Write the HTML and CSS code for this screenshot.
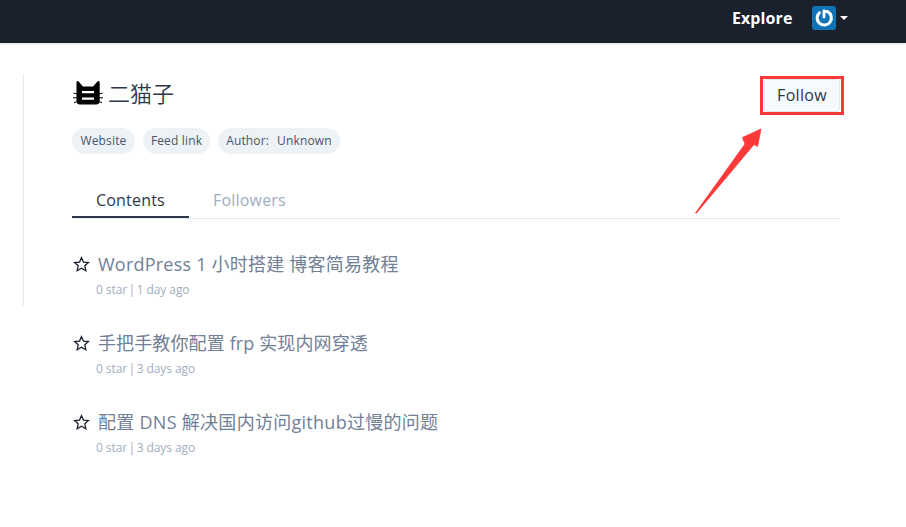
FILE: index.html
```html
<!DOCTYPE html>
<html lang="zh-CN">
<head>
<meta charset="utf-8">
<title>二猫子</title>
<link rel="stylesheet" href="styles.css">
</head>
<body>
<header class="navbar">
  <a class="explore">Explore</a>
  <div class="account">
    <svg class="avatar" viewBox="0 0 24 24" aria-hidden="true">
      <rect width="24" height="24" rx="3" fill="#1073b7"/>
      <path d="M7.400 6.800A7.100 7.100 0 1 0 15.500 5.700" fill="none" stroke="#fff" stroke-width="3" stroke-linecap="round"/>
      <path d="M12 5V11" stroke="#fff" stroke-width="2.800" stroke-linecap="round"/>
      <path d="M12 5L15.500 5.700" stroke="#fff" stroke-width="2.600" stroke-linecap="round"/>
    </svg>
    <svg class="caret" viewBox="0 0 8 4" aria-hidden="true"><path d="M0 0H8L4 4Z" fill="#fff"/></svg>
  </div>
</header>
<main class="page">
  <div class="rail"></div>
  <section class="profile">
    <div class="heading">
      <svg class="logo" viewBox="0 0 32 26" aria-hidden="true">
        <path d="M4.500 22V4C4.500 1.500 6 1.500 7 3L11 7.500H21L25 3C26 1.500 27.700 1.500 27.700 4V22Q27.700 25.500 24 25.500H8Q4.500 25.500 4.500 22Z" fill="#000"/>
        <path d="M1.500 14L5 15M1 18.800H5M2 23.800L5 22.500M30.500 14L27 15M31 18.800H27M30 23.800L27 22.500" stroke="#000" stroke-width="1"/>
        <path d="M10 13.200H22M10 19.600H22" stroke="#fff" stroke-width="2.300"/>
      </svg>
      <h1>二猫子</h1>
      <div class="follow-wrap"><button class="follow">Follow</button><svg class="arrow" viewBox="0 0 70 88" aria-hidden="true"><path d="M0.500 85L50 16L47.500 9.500L66 1L62.500 18.500L59 16.500L1.500 85Z" fill="#fd3838" stroke="#fd3838" stroke-width=".8" stroke-linejoin="round"/></svg></div>
    </div>
    <div class="tags">
      <span class="tag website">Website</span>
      <span class="tag feed">Feed link</span>
      <span class="tag author"><span>Author:</span><span>Unknown</span></span>
    </div>
    <nav class="tabs">
      <a class="tab active">Contents</a>
      <a class="tab">Followers</a>
    </nav>
    <div class="posts">
      <article class="post">
        <svg class="star" viewBox="0 0 18 18" aria-hidden="true"><path d="M9 1.800L11.100 6.400L16.300 7L12.500 10.400L13.600 15.600L9 13L4.400 15.600L5.500 10.400L1.700 7L6.900 6.400Z"/></svg>
        <div><h2 class="t1">WordPress 1 小时搭建 博客简易教程</h2><p>0 star<span class="bar"> | </span>1 day ago</p></div>
      </article>
      <article class="post">
        <svg class="star" viewBox="0 0 18 18" aria-hidden="true"><path d="M9 1.800L11.100 6.400L16.300 7L12.500 10.400L13.600 15.600L9 13L4.400 15.600L5.500 10.400L1.700 7L6.900 6.400Z"/></svg>
        <div><h2 class="t2">手把手教你配置 frp 实现内网穿透</h2><p>0 star<span class="bar"> | </span>3 days ago</p></div>
      </article>
      <article class="post">
        <svg class="star" viewBox="0 0 18 18" aria-hidden="true"><path d="M9 1.800L11.100 6.400L16.300 7L12.500 10.400L13.600 15.600L9 13L4.400 15.600L5.500 10.400L1.700 7L6.900 6.400Z"/></svg>
        <div><h2 class="t3">配置 DNS 解决国内访问github过慢的问题</h2><p>0 star<span class="bar"> | </span>3 days ago</p></div>
      </article>
    </div>
  </section>
</main>
</body>
</html>
```
FILE: styles.css
```css
* { box-sizing: border-box; }
body { margin: 0; height: 527px; overflow: hidden; background: #fff; color: #2d3748; font-family: "Open Sans", "Noto Sans CJK SC", sans-serif; }
h1, h2, p { margin: 0; font-weight: 400; }
svg { display: block; flex: none; }
.navbar { height: 43px; background: #1a202c; display: flex; justify-content: flex-end; padding: 6px 58px 0 0; box-shadow: 0 1px 3px rgba(26,32,44,.15); }
.explore { color: #fff; font-size: 16px; line-height: 24px; font-weight: 700; letter-spacing: .1px; margin-right: 19.500px; }
.account { display: flex; height: 24px; align-items: center; gap: 4px; }
.avatar { width: 24px; height: 24px; }
.caret { width: 8px; height: 4px; }
.page { display: flex; padding: 31px 66px 0 23px; }
.rail { width: 1px; height: 232px; background: #e2e8f0; margin-right: 48px; flex: none; }
.profile { flex: 1; }
.heading { display: flex; height: 42px; align-items: flex-start; }
.logo { width: 32px; height: 26px; margin-top: 5px; }
h1 { font-size: 22px; line-height: 32px; margin: 2px 0 0 4px; font-family: "Noto Sans CJK SC", sans-serif; font-weight: 350; }
.follow-wrap { position: relative; margin: 2px -4px 0 auto; width: 84px; height: 39px; border: 3px solid #fd3838; padding: 0 1px; }
.follow { width: 76px; height: 33px; border: 1px solid #e2e8f0; border-radius: 3px; padding: 0; background: #f7fafc; color: #2d3748; font: 16px/31px "Open Sans", sans-serif; letter-spacing: .3px; }
.arrow { position: absolute; left: -68px; top: 49px; width: 70px; height: 88px; }
.tags { display: flex; gap: 8px; margin-top: 12px; }
.tag { height: 26px; line-height: 25px; border-radius: 13px; background: #edf2f7; color: #4a5568; font-size: 12px; letter-spacing: .15px; display: flex; justify-content: center; white-space: nowrap; }
.website { width: 63px; }
.feed { width: 67px; }
.author { width: 122px; gap: 8px; }
.tabs { display: flex; height: 36px; margin-top: 29px; border-bottom: 1px solid #e2e8f0; }
.tab { height: 35px; line-height: 34px; font-size: 16px; letter-spacing: .2px; color: #a0aec0; padding: 0 24px; }
.active { width: 117px; border-bottom: 2px solid #2d3748; color: #2d3748; }
.posts { padding-top: 31px; }
.post { display: flex; height: 79px; }
.star { width: 17px; height: 17px; margin: 6px 6px 0 1px; fill: none; stroke: #1a202c; stroke-width: 1.400; stroke-linejoin: miter; }
.post h2 { font-size: 18px; line-height: 28px; padding-left: 2px; color: #718096; white-space: nowrap; font-family: "Open Sans", "Noto Sans CJK SC", sans-serif; }
.post .t1 { letter-spacing: .22px; }
.post .t2 { letter-spacing: .12px; }
.post .t3 { letter-spacing: .28px; }
.post p { font-size: 12px; line-height: 18px; margin-top: 3px; color: #a0aec0; letter-spacing: -.08px; }
.bar { word-spacing: -1.500px; }
```
